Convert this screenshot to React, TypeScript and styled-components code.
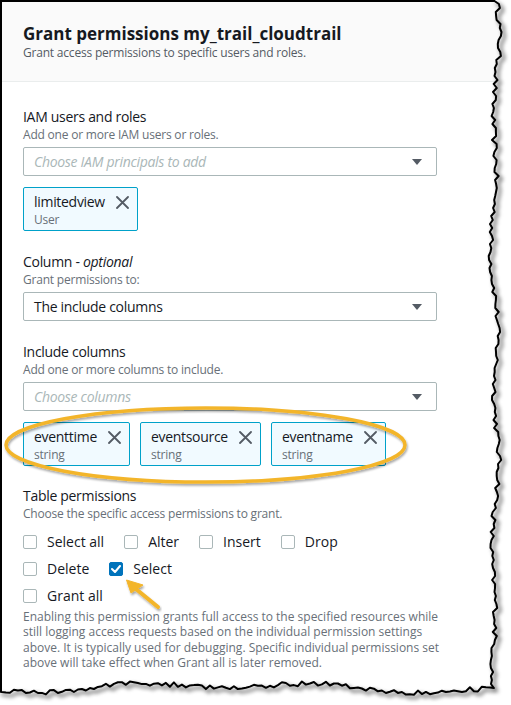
import React from 'react';
import styled, { createGlobalStyle } from 'styled-components';

const FONT = `"Open Sans", "Noto Sans", sans-serif`;

const Global = createGlobalStyle`
  html, body { margin: 0; padding: 0; background: #ffffff; }
  body { font-family: ${FONT}; color: #16191f; }
  * { box-sizing: border-box; }
`;

const Page = styled.div`
  position: relative;
  width: 511px;
  height: 705px;
  overflow: hidden;
  background: #ffffff;
`;

const Paper = styled.div`
  width: 505px;
  height: 705px;
  border-left: 2px solid #000;
  border-top: 2px solid #000;
  background: #ffffff;
`;

const Header = styled.header`
  background: #fafafa;
  border-bottom: 1px solid #eaeded;
  padding: 20px 20px 20px 21px;
  display: flex;
  flex-direction: column;
`;

const Title = styled.h2`
  margin: 0;
  font-size: 17px;
  line-height: 23px;
  font-weight: 700;
  color: #16191f;
`;

const Subtitle = styled.div`
  font-size: 12px;
  line-height: 16px;
  letter-spacing: -0.2px;
  color: #545b64;
`;

const Body = styled.div`
  padding: 25px 21px 0 21px;
  width: 456px;
  display: flex;
  flex-direction: column;
`;

const Section = styled.section<{ $gap?: number }>`
  display: flex;
  flex-direction: column;
  margin-top: ${(p) => p.$gap ?? 0}px;
`;

const Label = styled.div`
  font-size: 14px;
  line-height: 20px;
  letter-spacing: -0.3px;
  color: #16191f;
  em { font-style: italic; }
`;

const Desc = styled.div`
  font-size: 12px;
  line-height: 16px;
  letter-spacing: -0.2px;
  color: #687078;
`;

const SelectBox = styled.div`
  margin-top: 4px;
  width: 414px;
  height: 29px;
  border: 1px solid #aab7b8;
  border-radius: 2px;
  background: #fff;
  display: flex;
  align-items: center;
  justify-content: space-between;
  padding: 0 14px 0 10px;
`;

const SelectText = styled.span<{ $placeholder?: boolean }>`
  font-size: 14px;
  line-height: 20px;
  letter-spacing: -0.3px;
  color: ${(p) => (p.$placeholder ? '#aab7b8' : '#16191f')};
  font-style: ${(p) => (p.$placeholder ? 'italic' : 'normal')};
`;

const TokenList = styled.div`
  margin-top: 11px;
  display: flex;
  gap: 10px;
`;

const Token = styled.div`
  display: flex;
  align-items: flex-start;
  gap: 11px;
  height: 44px;
  padding: 4px 7px 3px 10px;
  border: 1px solid #00a1c9;
  border-radius: 2px;
  background: #f1faff;
`;

const TokenText = styled.div`
  display: flex;
  flex-direction: column;
`;

const TokenName = styled.span`
  font-size: 14px;
  line-height: 20px;
  letter-spacing: -0.3px;
  color: #16191f;
`;

const TokenSub = styled.span`
  font-size: 12px;
  line-height: 16px;
  letter-spacing: -0.2px;
  color: #687078;
`;

const CloseBtn = styled.span`
  display: flex;
  align-items: center;
  justify-content: center;
  width: 14px;
  height: 20px;
`;

const CheckRow = styled.div<{ $first?: boolean }>`
  display: flex;
  gap: 20px;
  margin-top: ${(p) => (p.$first ? 10 : 7)}px;
`;

const CheckItem = styled.label`
  display: flex;
  align-items: center;
  gap: 10px;
  height: 20px;
`;

const Box = styled.span<{ $checked?: boolean }>`
  width: 14px;
  height: 14px;
  border-radius: 2px;
  border: 1px solid ${(p) => (p.$checked ? '#0073bb' : '#aab7b8')};
  background: ${(p) => (p.$checked ? '#0073bb' : '#fff')};
  display: flex;
  align-items: center;
  justify-content: center;
`;

const CheckLabel = styled.span`
  font-size: 14px;
  line-height: 20px;
  letter-spacing: 0;
  color: #16191f;
`;

const Note = styled.p`
  margin: 3px 0 0 0;
  width: 420px;
  font-size: 12px;
  line-height: 15.4px;
  color: #687078;
`;

const Overlay = styled.svg`
  position: absolute;
  left: 0;
  top: 0;
  pointer-events: none;
`;

const Caret = () => (
  <svg width="10" height="6" viewBox="0 0 10 6">
    <path d="M0 0 L10 0 L5 6 Z" fill="#545b64" />
  </svg>
);

const CloseIcon = () => (
  <CloseBtn>
    <svg width="13" height="13" viewBox="0 0 13 13">
      <path d="M1 1 L12 12 M12 1 L1 12" stroke="#545b64" strokeWidth="1.8" strokeLinecap="round" />
    </svg>
  </CloseBtn>
);

const Check = () => (
  <svg width="10" height="8" viewBox="0 0 10 8">
    <path d="M1 4 L4 7 L9 1" stroke="#fff" strokeWidth="2" fill="none" strokeLinecap="round" strokeLinejoin="round" />
  </svg>
);

type Tok = { name: string; sub: string };

const TokenItem = ({ name, sub }: Tok) => (
  <Token>
    <TokenText>
      <TokenName>{name}</TokenName>
      <TokenSub>{sub}</TokenSub>
    </TokenText>
    <CloseIcon />
  </Token>
);

const CB = ({ label, checked }: { label: string; checked?: boolean }) => (
  <CheckItem>
    <Box $checked={checked}>{checked && <Check />}</Box>
    <CheckLabel>{label}</CheckLabel>
  </CheckItem>
);

function makeRng(seed: number) {
  let s = seed;
  return () => {
    s = (s * 16807) % 2147483647;
    return s / 2147483647;
  };
}

function tornPaths() {
  const r = makeRng(12345);
  const right: [number, number][] = [];
  for (let y = 0; y <= 688; y += 4) {
    const x = 495 + 2.5 * Math.sin(y / 23) + 2 * Math.sin(y / 61 + 1) + (r() - 0.5) * 5;
    right.push([y === 0 ? 493 : x, y]);
  }
  const bottom: [number, number][] = [];
  const last = right[right.length - 1];
  for (let x = last[0] - 4; x >= -4; x -= 4) {
    const y = 688 + 3 * Math.sin(x / 29) + 3 * Math.sin(x / 83 + 2) + (r() - 0.5) * 5;
    bottom.push([x, y]);
  }
  const pts = [...right, ...bottom];
  const edge = 'M' + pts.map((p) => `${p[0].toFixed(1)},${p[1].toFixed(1)}`).join(' L');
  const fill = `M493,-10 L${pts.map((p) => `${p[0].toFixed(1)},${p[1].toFixed(1)}`).join(' L')} L-10,${bottom[bottom.length - 1][1].toFixed(1)} L-10,720 L525,720 L525,-10 Z`;
  return { edge, fill };
}

const torn = tornPaths();

export default function App() {
  return (
    <Page>
      <Global />
      <Paper>
        <Header>
          <Title>Grant permissions my_trail_cloudtrail</Title>
          <Subtitle>Grant access permissions to specific users and roles.</Subtitle>
        </Header>
        <Body>
          <Section>
            <Label>IAM users and roles</Label>
            <Desc>Add one or more IAM users or roles.</Desc>
            <SelectBox>
              <SelectText $placeholder>Choose IAM principals to add</SelectText>
              <Caret />
            </SelectBox>
            <TokenList>
              <TokenItem name="limitedview" sub="User" />
            </TokenList>
          </Section>
          <Section $gap={21}>
            <Label>
              Column - <em>optional</em>
            </Label>
            <Desc>Grant permissions to:</Desc>
            <SelectBox>
              <SelectText>The include columns</SelectText>
              <Caret />
            </SelectBox>
          </Section>
          <Section $gap={21}>
            <Label>Include columns</Label>
            <Desc>Add one or more columns to include.</Desc>
            <SelectBox>
              <SelectText $placeholder>Choose columns</SelectText>
              <Caret />
            </SelectBox>
            <TokenList>
              <TokenItem name="eventtime" sub="string" />
              <TokenItem name="eventsource" sub="string" />
              <TokenItem name="eventname" sub="string" />
            </TokenList>
          </Section>
          <Section $gap={20}>
            <Label>Table permissions</Label>
            <Desc>Choose the specific access permissions to grant.</Desc>
            <CheckRow $first>
              <CB label="Select all" />
              <CB label="Alter" />
              <CB label="Insert" />
              <CB label="Drop" />
            </CheckRow>
            <CheckRow>
              <CB label="Delete" />
              <CB label="Select" checked />
            </CheckRow>
            <CheckRow>
              <CB label="Grant all" />
            </CheckRow>
            <Note>
              Enabling this permission grants full access to the specified resources while still logging access
              requests based on the individual permission settings above. It is typically used for debugging.
              Specific individual permissions set above will take effect when Grant all is later removed.
            </Note>
          </Section>
        </Body>
      </Paper>
      <Overlay width="511" height="705" viewBox="0 0 511 705">
        <defs>
          <filter id="tornShadow" x="-10%" y="-10%" width="130%" height="130%">
            <feDropShadow dx="3" dy="3" stdDeviation="2" floodColor="#000" floodOpacity="0.75" />
          </filter>
          <filter id="annoShadow" x="-10%" y="-20%" width="120%" height="150%">
            <feDropShadow dx="1" dy="2" stdDeviation="1.2" floodColor="#000" floodOpacity="0.35" />
          </filter>
        </defs>
        <ellipse cx="205.5" cy="445" rx="199.5" ry="37" fill="none" stroke="#f3b52c" strokeWidth="3.5" filter="url(#annoShadow)" />
        <g filter="url(#annoShadow)">
          <path d="M158 607 L136 589" stroke="#f3b52c" strokeWidth="4" strokeLinecap="round" />
          <path d="M126.5 580 L143 585 L131 593 Z" fill="#f3b52c" stroke="#f3b52c" strokeWidth="1" strokeLinejoin="round" />
        </g>
        <path d={torn.fill} fill="#ffffff" />
        <path d={torn.edge} fill="none" stroke="#000" strokeWidth="2" strokeLinejoin="round" filter="url(#tornShadow)" />
      </Overlay>
    </Page>
  );
}
